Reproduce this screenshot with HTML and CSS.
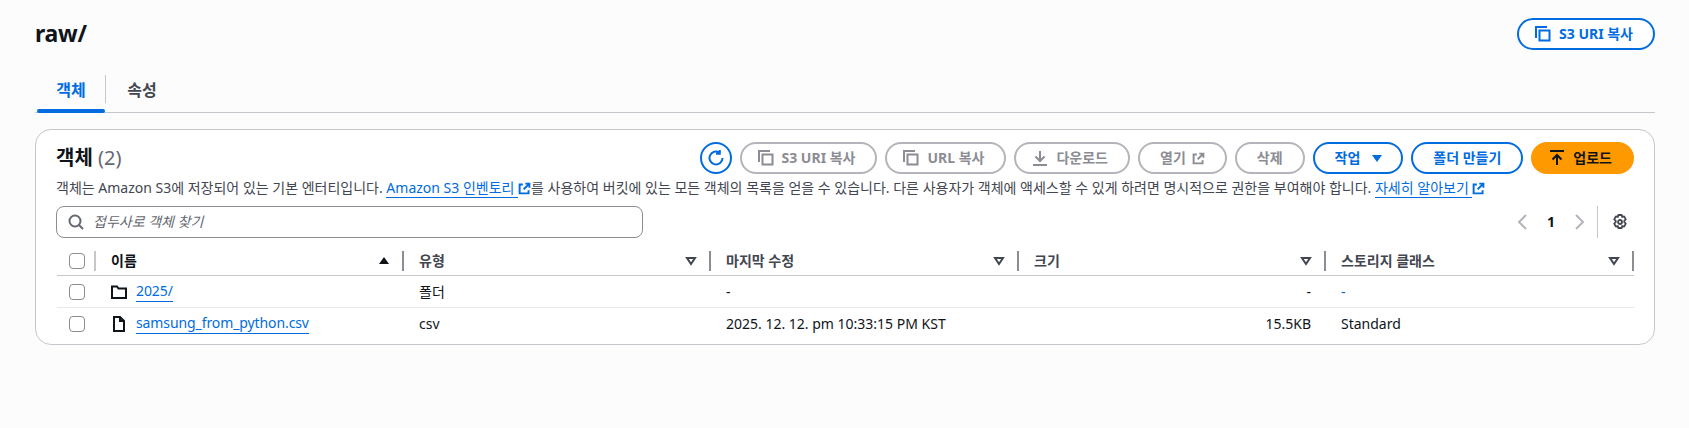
FILE: index.html
```html
<!DOCTYPE html>
<html lang="ko">
<head>
    <meta charset="UTF-8">
    <title>raw/ - S3</title>
    <link rel="stylesheet" href="styles.css">
</head>
<body>
    <svg class="sprites" width="0" height="0">
        <symbol id="i-copy" viewBox="0 0 16 16"><path d="M1 12V1h11M4.500 4.500h10v10h-10z" fill="none" stroke="currentColor" stroke-width="2"/></symbol>
        <symbol id="i-download" viewBox="0 0 16 16"><path d="M8 1v9M3.500 6.500 8 11l4.500-4.500M1 15h14" fill="none" stroke="currentColor" stroke-width="2"/></symbol>
        <symbol id="i-upload" viewBox="0 0 16 16"><path d="M8 15V5M3.500 9.500 8 5l4.500 4.500M1 1h14" fill="none" stroke="currentColor" stroke-width="2"/></symbol>
        <symbol id="i-external" viewBox="0 0 16 16"><path d="M6 3H2v11h11v-4M9 2h5v5M14 2 7 9" fill="none" stroke="currentColor" stroke-width="2.400"/></symbol>
    </svg>

    <main class="page">
        <div class="page-head">
            <h1>raw/</h1>
            <button class="btn btn-normal btn-lead"><svg class="icon"><use href="#i-copy"/></svg>S3 URI 복사</button>
        </div>

        <nav class="tabs">
            <a class="tab active">객체</a>
            <a class="tab">속성</a>
        </nav>

        <section class="card">
            <div class="card-head">
                <h2>객체 <span class="count">(2)</span></h2>
                <div class="actions">
                    <button class="btn-round">
                        <svg class="icon" viewBox="0 0 16 16"><path d="M14.500 8A6.500 6.500 0 1 1 11.500 2.500M11.800 0v3.800H8" fill="none" stroke="currentColor" stroke-width="2"/></svg>
                    </button>
                    <button class="btn btn-off btn-lead"><svg class="icon"><use href="#i-copy"/></svg>S3 URI 복사</button>
                    <button class="btn btn-off btn-lead"><svg class="icon"><use href="#i-copy"/></svg>URL 복사</button>
                    <button class="btn btn-off btn-lead"><svg class="icon"><use href="#i-download"/></svg>다운로드</button>
                    <button class="btn btn-off btn-ext">열기<svg class="icon-ext"><use href="#i-external"/></svg></button>
                    <button class="btn btn-off btn-wide">삭제</button>
                    <button class="btn btn-normal btn-menu">작업<svg class="icon caret" viewBox="0 0 16 16"><path d="M3 5h10l-5 7z" fill="currentColor"/></svg></button>
                    <button class="btn btn-normal btn-wide">폴더 만들기</button>
                    <button class="btn btn-primary btn-lead"><svg class="icon"><use href="#i-upload"/></svg>업로드</button>
                </div>
            </div>
            <p class="desc">객체는 Amazon S3에 저장되어 있는 기본 엔터티입니다. <a class="link">Amazon S3 인벤토리 </a> <svg class="icon-ext"><use href="#i-external"/></svg>를 사용하여 버킷에 있는 모든 객체의 목록을 얻을 수 있습니다. 다른 사용자가 객체에 액세스할 수 있게 하려면 명시적으로 권한을 부여해야 합니다. <a class="link">자세히 알아보기 </a> <svg class="icon-ext"><use href="#i-external"/></svg></p>

            <div class="tools">
                <div class="search">
                    <svg class="icon" viewBox="0 0 16 16"><circle cx="7" cy="7" r="5.500" fill="none" stroke="currentColor" stroke-width="2"/><path d="m10.500 10.500 4.500 4.500" stroke="currentColor" stroke-width="2"/></svg>
                    <span>접두사로 객체 찾기</span>
                </div>
                <div class="pager">
                    <svg class="icon" viewBox="0 0 16 16"><path d="M11 1 4 8l7 7" fill="none" stroke="currentColor" stroke-width="2"/></svg>
                    <b>1</b>
                    <svg class="icon" viewBox="0 0 16 16"><path d="m5 1 7 7-7 7" fill="none" stroke="currentColor" stroke-width="2"/></svg>
                    <span class="pager-sep"></span>
                    <svg class="icon gear" viewBox="0 0 16 16"><path d="M6.300 1h3.400l.5 2 1.900-.6 1.700 3-1.500 1.400v1.400l1.500 1.400-1.700 3-1.900-.6-.5 2H6.300l-.5-2-1.900.6-1.700-3 1.500-1.400V6.800L2.200 5.400l1.700-3 1.900.6z" fill="none" stroke="currentColor" stroke-width="1.800" stroke-linejoin="round"/><circle cx="8" cy="8" r="2" fill="none" stroke="currentColor" stroke-width="1.800"/></svg>
                </div>
            </div>

            <div class="table">
                <div class="row row-head">
                    <div class="cell cell-check"><i class="check"></i></div>
                    <div class="cell cell-sorted">이름<svg class="sort" viewBox="0 0 12 12"><path d="M6 2l5 7H1z" fill="currentColor"/></svg></div>
                    <div class="cell">유형<svg class="sort" viewBox="0 0 12 12"><path d="M2 3h8L6 9z" fill="none" stroke="currentColor" stroke-width="2"/></svg></div>
                    <div class="cell">마지막 수정<svg class="sort" viewBox="0 0 12 12"><path d="M2 3h8L6 9z" fill="none" stroke="currentColor" stroke-width="2"/></svg></div>
                    <div class="cell">크기<svg class="sort" viewBox="0 0 12 12"><path d="M2 3h8L6 9z" fill="none" stroke="currentColor" stroke-width="2"/></svg></div>
                    <div class="cell">스토리지 클래스<svg class="sort" viewBox="0 0 12 12"><path d="M2 3h8L6 9z" fill="none" stroke="currentColor" stroke-width="2"/></svg></div>
                </div>
                <div class="row">
                    <div class="cell cell-check"><i class="check"></i></div>
                    <div class="cell">
                        <svg class="icon file-icon" viewBox="0 0 16 16"><path d="M1 14V2.500h5l1.500 2H15V14z" fill="none" stroke="currentColor" stroke-width="2"/></svg>
                        <a class="link">2025/</a>
                    </div>
                    <div class="cell">폴더</div>
                    <div class="cell">-</div>
                    <div class="cell cell-num">-</div>
                    <div class="cell"><a class="link link-plain">-</a></div>
                </div>
                <div class="row row-last">
                    <div class="cell cell-check"><i class="check"></i></div>
                    <div class="cell">
                        <svg class="icon file-icon" viewBox="0 0 16 16"><path d="M3 1h6l4 4v10H3zM9 1v4h4" fill="none" stroke="currentColor" stroke-width="2"/></svg>
                        <a class="link">samsung_from_python.csv</a>
                    </div>
                    <div class="cell">csv</div>
                    <div class="cell">2025. 12. 12. pm 10:33:15 PM KST</div>
                    <div class="cell cell-num">15.5KB</div>
                    <div class="cell">Standard</div>
                </div>
            </div>
        </section>
    </main>
</body>
</html>
```

FILE: styles.css
```css
body {
    background: #fcfcfc;
    color: #0f141a;
    font-family: "Noto Sans", "Noto Sans CJK KR", sans-serif;
    font-size: 14px;
    line-height: 20px;
    margin: 0;
}

.sprites {
    display: block;
    position: absolute;
}

.page {
    padding: 18px 34px 0 35px;
}

.page-head {
    display: flex;
    justify-content: space-between;
    height: 32px;
}

h1 {
    font-size: 23px;
    font-weight: 700;
    letter-spacing: -0.3px;
    line-height: 30px;
    margin: 0;
}

.icon {
    width: 16px;
    height: 16px;
    flex: none;
}

.btn {
    display: inline-flex;
    align-items: center;
    justify-content: center;
    gap: 8px;
    box-sizing: border-box;
    height: 32px;
    padding: 0 18px;
    border: 2px solid #006ce0;
    border-radius: 20px;
    background: transparent;
    color: #006ce0;
    font: inherit;
    font-weight: 700;
}

.btn-normal {
    background: #fff;
}

.btn-off {
    border-color: #b4b4bb;
    color: #8c8c94;
}

.btn-wide {
    padding: 0 20px;
}

.btn-lead {
    padding: 0 20px 0 16px;
}

.btn-menu {
    padding: 0 16px 0 20px;
}

.btn-ext {
    gap: 6px;
    padding: 0 20px;
}

.btn-primary {
    background: #ff9900;
    border-color: #ff9900;
    color: #0f141a;
}

.btn-round {
    display: flex;
    align-items: center;
    justify-content: center;
    box-sizing: border-box;
    width: 32px;
    height: 32px;
    padding: 0;
    border: 2px solid #006ce0;
    border-radius: 50%;
    background: #fff;
    color: #006ce0;
}

.caret {
    margin-left: 1px;
}

.tabs {
    display: flex;
    margin-top: 18px;
    height: 44px;
    border-bottom: 1px solid #c6c6cd;
}

.tab {
    position: relative;
    display: flex;
    align-items: center;
    justify-content: center;
    width: 74px;
    font-size: 16px;
    font-weight: 700;
    color: #424650;
}

.tab.active {
    width: 68px;
    margin-left: 2px;
    color: #006ce0;
}

.tab.active::after {
    content: "";
    position: absolute;
    left: 0;
    right: 0;
    bottom: -1px;
    height: 4px;
    background: #006ce0;
    border-radius: 2px;
}

.tab.active::before {
    content: "";
    position: absolute;
    right: -1px;
    top: 7px;
    height: 28px;
    border-right: 1px solid #c6c6cd;
}

.card {
    margin-top: 16px;
    background: #fff;
    border: 1px solid #c6c6cd;
    border-radius: 16px;
    height: 202px;
    padding: 12px 20px 0 20px;
}

.card-head {
    display: flex;
    justify-content: space-between;
    align-items: center;
}

h2 {
    font-size: 20px;
    font-weight: 700;
    line-height: 24px;
    margin: 0;
}

.count {
    font-weight: 400;
    color: #656871;
}

.actions {
    display: flex;
    gap: 8px;
}

.desc {
    margin: 4px 0 0;
    color: #424650;
    font-size: 14px;
    line-height: 20px;
}

.link {
    color: #006ce0;
    border-bottom: 1px solid #006ce0;
}

.link-plain {
    border-bottom: 0;
}

.cell .link {
    letter-spacing: -0.1px;
}

.icon-ext {
    width: 13px;
    height: 13px;
    flex: none;
    vertical-align: -2px;
}

.desc .icon-ext {
    color: #006ce0;
}

.tools {
    display: flex;
    justify-content: space-between;
    margin-top: 8px;
}

.search {
    display: flex;
    align-items: center;
    gap: 9px;
    box-sizing: border-box;
    width: 587px;
    height: 32px;
    padding: 0 11px;
    border: 1px solid #8c8c94;
    border-radius: 8px;
    color: #656871;
    font-style: italic;
}

.pager {
    display: flex;
    align-items: center;
    gap: 16px;
    padding-right: 6px;
    color: #b4b4bb;
}

.pager b {
    color: #0f141a;
}

.pager-sep {
    height: 32px;
    margin: 0 -2px 0 -6px;
    border-left: 1px solid #c6c6cd;
}

.gear {
    color: #424650;
}

.table {
    margin: 8px 0 0 1px;
}

.row {
    display: grid;
    grid-template-columns: 39px 308px 307px 308px 307px 308px;
    height: 31px;
    border-bottom: 1px solid #e8e8ec;
    align-items: center;
}

.row-head {
    height: 29px;
    border-bottom-color: #c6c6cd;
    font-weight: 700;
    color: #424650;
}

.row-last {
    border-bottom: 0;
}

.cell {
    display: flex;
    align-items: center;
    padding-left: 15px;
    height: 20px;
}

.cell-check {
    padding-left: 12px;
}

.cell-num {
    justify-content: flex-end;
    padding-right: 15px;
}

.row-head .cell {
    justify-content: space-between;
    border-right: 2px solid #8c8c94;
    padding-right: 12px;
    box-sizing: border-box;
}

.row-head .cell-check {
    border-right-color: #c6c6cd;
    padding-right: 0;
}

.row-head .cell-sorted {
    color: #0f141a;
}

.sort {
    width: 12px;
    height: 12px;
}

.check {
    display: block;
    flex: none;
    box-sizing: border-box;
    width: 16px;
    height: 16px;
    border: 1px solid #8c8c94;
    border-radius: 4px;
    background: #fff;
}

.file-icon {
    margin-right: 9px;
}
```
